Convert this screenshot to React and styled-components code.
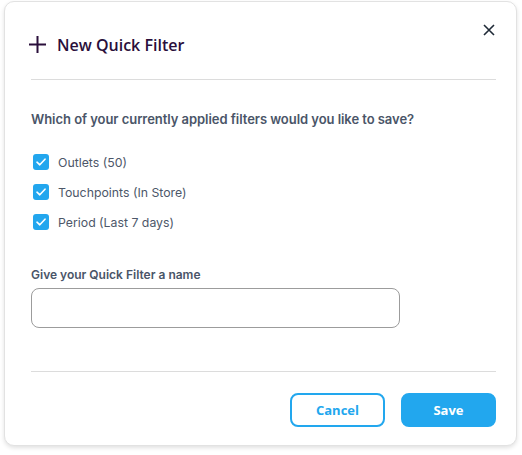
import React from "react";
import styled, { createGlobalStyle } from "styled-components";

const Global = createGlobalStyle`
  html, body { margin: 0; padding: 0; background: #fff; }
  body { font-family: "Inter", "Liberation Sans", sans-serif; }
  * { box-sizing: border-box; }
`;

const Page = styled.div`
  padding: 1px 5px 9px 4px;
`;

const Card = styled.div`
  position: relative;
  width: 513px;
  height: 445px;
  background: #fff;
  border: 1px solid #e2e2e2;
  border-radius: 10px;
  box-shadow: 0 2px 4px rgba(0, 0, 0, 0.12);
  padding: 0 20px 0 26px;
  display: flex;
  flex-direction: column;
`;

const Header = styled.div`
  height: 78px;
  display: flex;
  align-items: center;
  gap: 10px;
  padding-top: 8px;
  border-bottom: 1px solid #dcdcdc;
`;

const PlusIcon = styled.svg`
  margin-left: -3px;
  flex-shrink: 0;
`;

const Title = styled.h2`
  margin: 0;
  font-family: "Open Sans", "Noto Sans", sans-serif;
  font-weight: 600;
  font-size: 16px;
  color: #2a0f3b;
`;

const Close = styled.button`
  position: absolute;
  top: 18px;
  right: 17px;
  width: 20px;
  height: 20px;
  border: 0;
  background: none;
  padding: 0;
  display: flex;
  align-items: center;
  justify-content: center;
  cursor: pointer;
`;

const Body = styled.div`
  flex: 1;
  padding-top: 30px;
  display: flex;
  flex-direction: column;
  border-bottom: 1px solid #dcdcdc;
`;

const Question = styled.p`
  margin: 0 0 25px;
  font-size: 13px;
  font-weight: 600;
  line-height: 18px;
  letter-spacing: -0.05px;
  color: #4a5568;
`;

const List = styled.div`
  display: flex;
  flex-direction: column;
  gap: 12px;
`;

const Row = styled.label`
  display: flex;
  align-items: center;
  gap: 9px;
  height: 18px;
  padding-left: 2px;
  font-size: 12.3px;
  color: #4d5769;
`;

const Box = styled.span`
  width: 16px;
  height: 16px;
  border-radius: 3px;
  background: #22a6ee;
  display: flex;
  align-items: center;
  justify-content: center;
`;

const FieldLabel = styled.div`
  margin-top: 36px;
  font-size: 12px;
  font-weight: 600;
  line-height: 16px;
  color: #4a5568;
`;

const Input = styled.input`
  margin-top: 5px;
  width: 369px;
  height: 40px;
  border: 1px solid #9c9c9c;
  border-radius: 8px;
  outline: none;
  padding: 0 12px;
  font-family: "Inter", sans-serif;
  font-size: 13px;
`;

const Footer = styled.div`
  height: 73px;
  display: flex;
  justify-content: flex-end;
  align-items: flex-start;
  gap: 16px;
  padding-top: 21px;
`;

const Button = styled.button`
  width: 95px;
  height: 34px;
  border-radius: 8px;
  font-family: "Open Sans", "Noto Sans", sans-serif;
  font-weight: 700;
  font-size: 13px;
  cursor: pointer;
  border: 2px solid #22a7ee;
  background: ${(p) => (p.$primary ? "#22a7ee" : "#fff")};
  color: ${(p) => (p.$primary ? "#fff" : "#22a7ee")};
`;

const Check = () => (
  <svg width="10" height="8" viewBox="0 0 10 8">
    <path d="M1 4.2 L3.8 6.8 L9 1.2" fill="none" stroke="#fff" strokeWidth="1.6" strokeLinecap="round" strokeLinejoin="round" />
  </svg>
);

const items = ["Outlets (50)", "Touchpoints (In Store)", "Period (Last 7 days)"];

export default function App() {
  return (
    <>
      <Global />
      <Page>
        <Card>
          <Header>
            <PlusIcon width="19" height="19" viewBox="0 0 19 19">
              <path d="M9.5 1 V18 M1 9.5 H18" stroke="#2a0f3b" strokeWidth="2" />
            </PlusIcon>
            <Title>New Quick Filter</Title>
          </Header>
          <Close aria-label="Close">
            <svg width="12" height="12" viewBox="0 0 12 12">
              <path d="M1 1 L11 11 M11 1 L1 11" stroke="#1f2a37" strokeWidth="1.6" />
            </svg>
          </Close>
          <Body>
            <Question>Which of your currently applied filters would you like to save?</Question>
            <List>
              {items.map((t) => (
                <Row key={t}>
                  <Box><Check /></Box>
                  {t}
                </Row>
              ))}
            </List>
            <FieldLabel>Give your Quick Filter a name</FieldLabel>
            <Input type="text" />
          </Body>
          <Footer>
            <Button>Cancel</Button>
            <Button $primary>Save</Button>
          </Footer>
        </Card>
      </Page>
    </>
  );
}
